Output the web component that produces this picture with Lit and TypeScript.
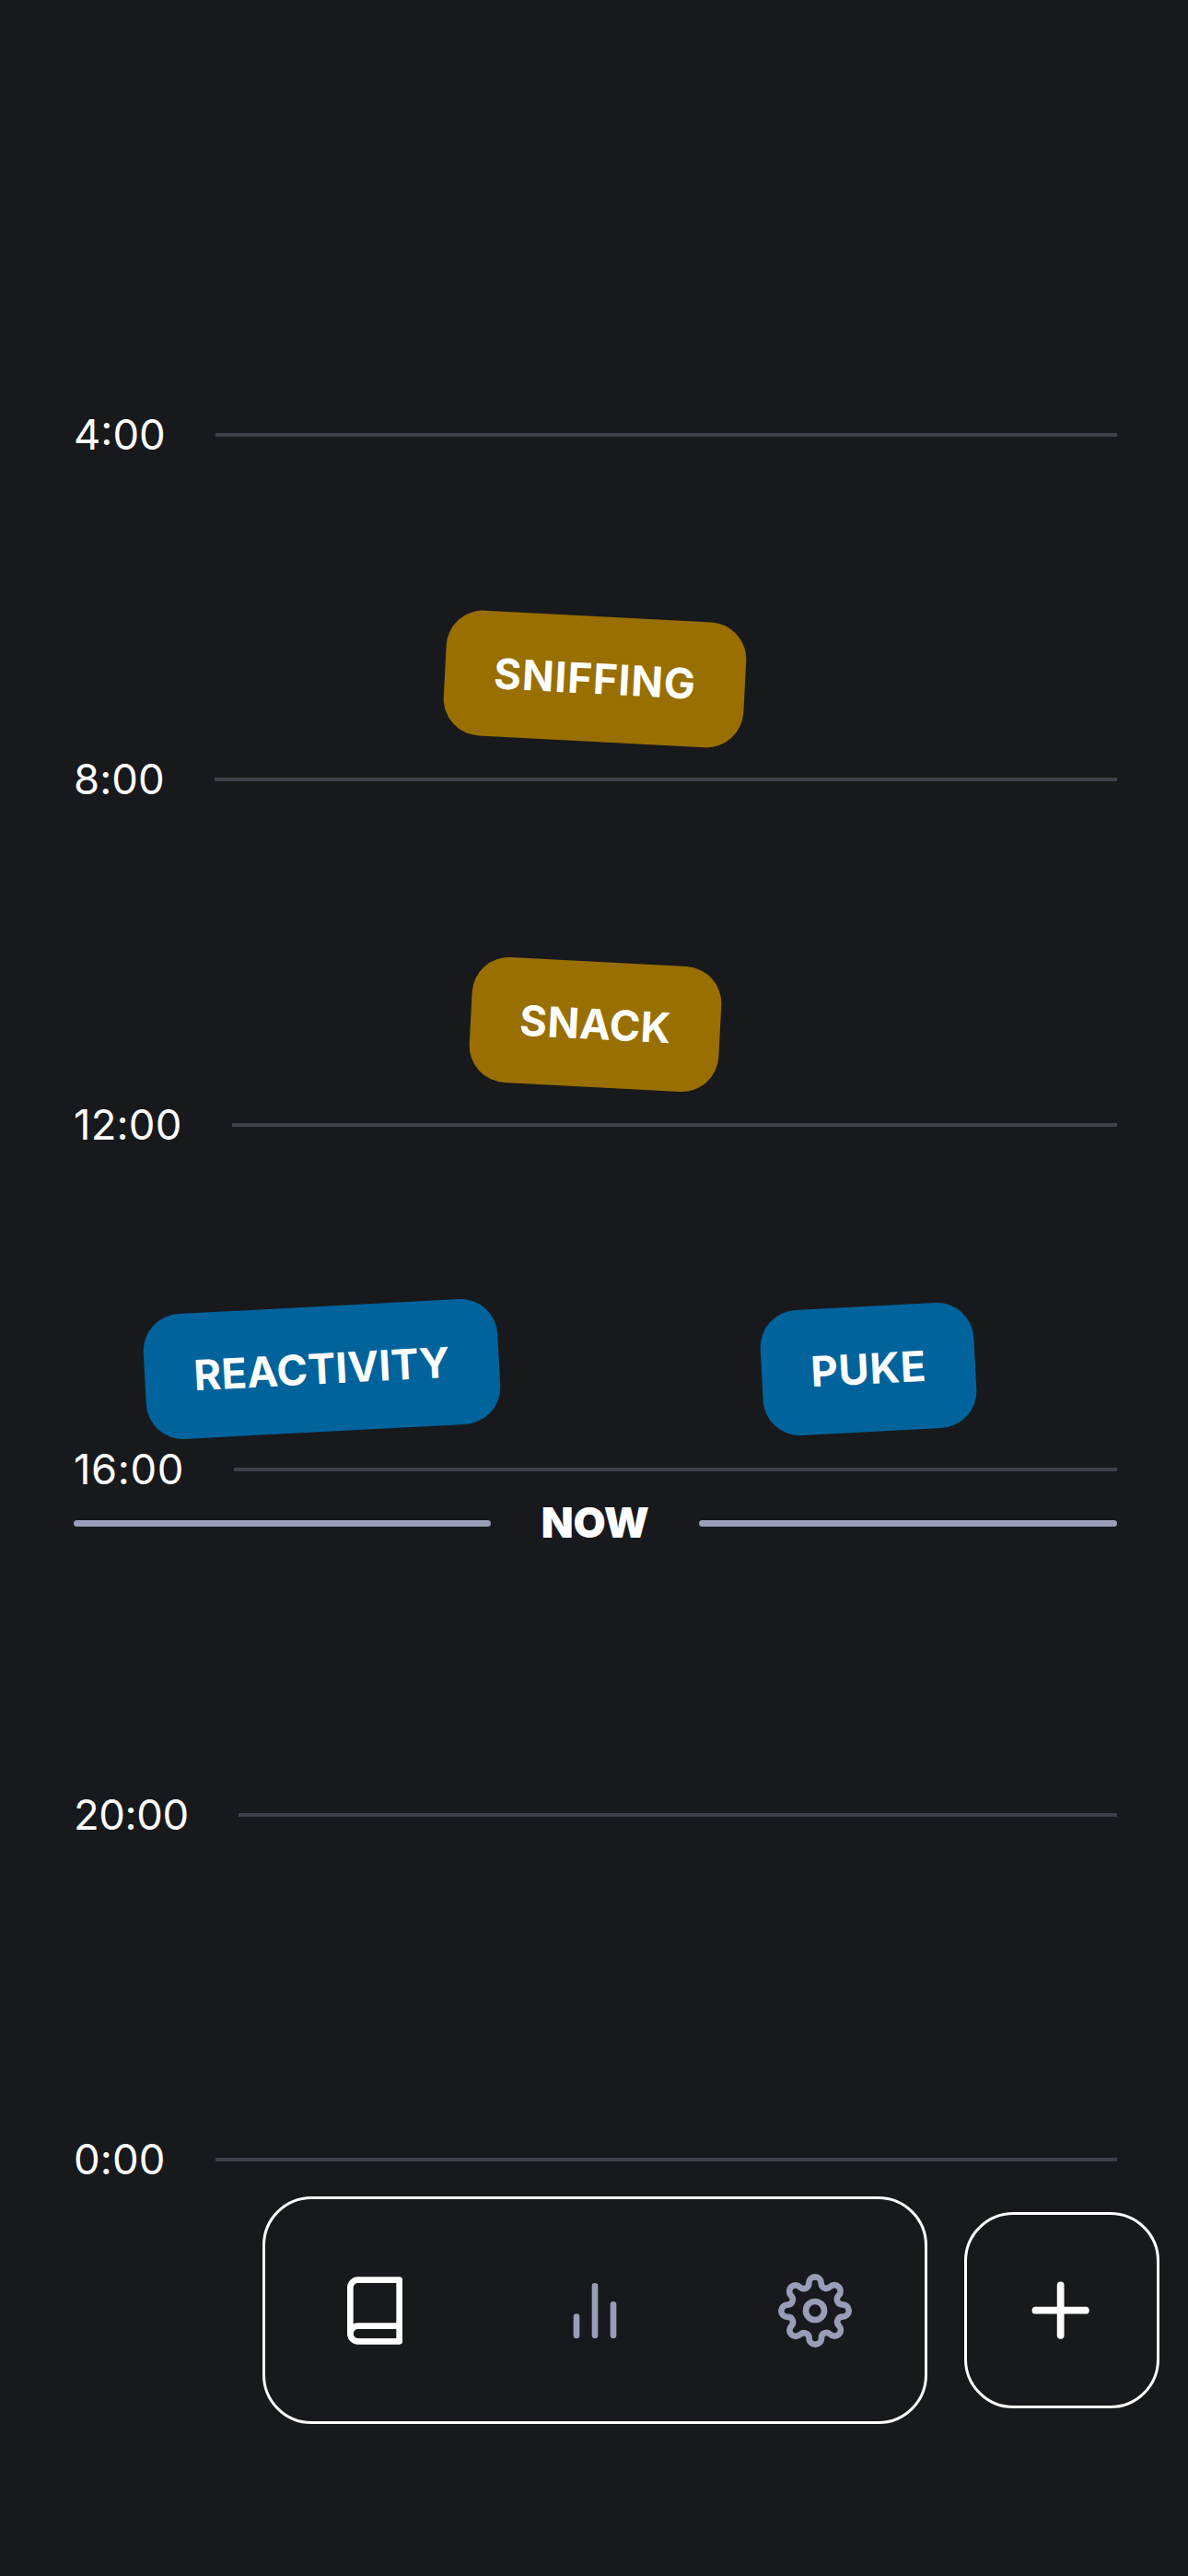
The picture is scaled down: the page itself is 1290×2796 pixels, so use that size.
import { LitElement, html, css, svg } from "lit";
import { customElement, property } from "lit/decorators.js";
import { styleMap } from "lit/directives/style-map.js";

type Entry = { name: string; tone: "amber" | "blue"; tracking: number };
type Slot = { time: string; tracking: number; entries?: Entry[]; now?: boolean };

const SLOTS: Slot[] = [
  { time: "4:00", tracking: 0, entries: [{ name: "Sniffing", tone: "amber", tracking: 1 }] },
  { time: "8:00", tracking: 0.1, entries: [{ name: "Snack", tone: "amber", tracking: 0.4 }] },
  {
    time: "12:00",
    tracking: 0.2,
    entries: [
      { name: "Reactivity", tone: "blue", tracking: 0.2 },
      { name: "Puke", tone: "blue", tracking: 0.7 },
    ],
  },
  { time: "16:00", tracking: 0.6, now: true },
  { time: "20:00", tracking: -0.4 },
  { time: "0:00", tracking: 0.1 },
];

const ICONS = {
  book: svg`<path d="M4 19.5A2.5 2.5 0 0 1 6.5 17H20"/><path d="M6.5 2H20v20H6.5A2.5 2.5 0 0 1 4 19.5v-15A2.5 2.5 0 0 1 6.5 2z"/>`,
  chart: svg`<path d="M18 20V10M12 20V4M6 20v-6"/>`,
  settings: svg`<circle cx="12" cy="12" r="3"/><path d="M19.4 15a1.65 1.65 0 0 0 .33 1.82l.06.06a2 2 0 0 1 0 2.83 2 2 0 0 1-2.83 0l-.06-.06a1.65 1.65 0 0 0-1.82-.33 1.65 1.65 0 0 0-1 1.51V21a2 2 0 0 1-2 2 2 2 0 0 1-2-2v-.09A1.65 1.65 0 0 0 9 19.4a1.65 1.65 0 0 0-1.82.33l-.06.06a2 2 0 0 1-2.83 0 2 2 0 0 1 0-2.83l.06-.06a1.65 1.65 0 0 0 .33-1.82 1.65 1.65 0 0 0-1.51-1H3a2 2 0 0 1-2-2 2 2 0 0 1 2-2h.09A1.65 1.65 0 0 0 4.6 9a1.65 1.65 0 0 0-.33-1.82l-.06-.06a2 2 0 0 1 0-2.83 2 2 0 0 1 2.83 0l.06.06a1.65 1.65 0 0 0 1.82.33H9a1.65 1.65 0 0 0 1-1.51V3a2 2 0 0 1 2-2 2 2 0 0 1 2 2v.09a1.65 1.65 0 0 0 1 1.51 1.65 1.65 0 0 0 1.82-.33l.06-.06a2 2 0 0 1 2.83 0 2 2 0 0 1 0 2.83l-.06.06a1.65 1.65 0 0 0-.33 1.82V9a1.65 1.65 0 0 0 1.51 1H21a2 2 0 0 1 2 2 2 2 0 0 1-2 2h-.09a1.65 1.65 0 0 0-1.51 1z"/>`,
  plus: svg`<path d="M12 5v14M5 12h14"/>`,
};

@customElement("line-icon")
class LineIcon extends LitElement {
  @property() name: keyof typeof ICONS = "book";

  static styles = css`
    :host {
      display: block;
      width: 80px;
      height: 80px;
    }
    .icon {
      display: block;
      width: 100%;
      height: 100%;
      fill: none;
      stroke: currentColor;
      stroke-width: 2;
      stroke-linecap: round;
      stroke-linejoin: round;
    }
  `;

  render() {
    return html`<svg class="icon" viewBox="0 0 24 24">${ICONS[this.name]}</svg>`;
  }
}

@customElement("app-root")
class AppRoot extends LitElement {
  static styles = css`
    :host {
      display: flex;
      flex-direction: column;
      box-sizing: border-box;
      height: 2796px;
      padding-top: 444px;
      overflow: hidden;
      background: #18191c;
      color: #fff;
      font-family: Inter, "Liberation Sans", sans-serif;
      font-size: 45.4px;
      line-height: 56px;
    }
    .timeline {
      display: flex;
      flex-direction: column;
      padding: 0 77.5px 0 80px;
    }
    .slot {
      display: flex;
      flex-direction: column;
      box-sizing: border-box;
      height: 374.4px;
      padding-bottom: 13px;
    }
    .slot:last-child {
      height: 56px;
      padding: 0;
    }
    .tick,
    .now {
      display: flex;
      align-items: center;
      gap: 54.5px;
    }
    .tick::after {
      content: "";
      flex: 1;
      height: 4px;
      background: #3f404a;
    }
    .now {
      margin-top: 2px;
      font-weight: 900;
    }
    .now::before,
    .now::after {
      content: "";
      flex: 1;
      height: 6.7px;
      border-radius: 4px;
      background: #999db8;
    }
    .entries {
      display: flex;
      gap: 53.3px;
      margin-top: auto;
    }
    .cell {
      display: flex;
      flex: 1 1 0;
      justify-content: center;
    }
    .chip {
      padding: 40px 53.3px;
      border-radius: 40px;
      line-height: 56px;
      font-weight: 650;
      text-transform: uppercase;
    }
    .amber {
      background: #986f00;
      transform: rotate(3deg);
    }
    .blue {
      background: #00639b;
      transform: rotate(-3deg);
    }
    .dock {
      display: flex;
      align-items: center;
      justify-content: flex-end;
      gap: 39.3px;
      margin-top: 12px;
      padding-right: 31px;
    }
    .tabs,
    .add {
      display: flex;
      align-items: center;
      box-sizing: border-box;
      border: 3.4px solid #fff;
      border-radius: 53.3px;
      background: #18191c;
    }
    .tabs {
      justify-content: space-between;
      width: 722.4px;
      height: 246.7px;
      padding: 1px 79px 0;
      color: #999db8;
    }
    .active {
      color: #fff;
    }
    .add {
      justify-content: center;
      width: 212.5px;
      height: 212.5px;
      padding-right: 1.5px;
    }
    .plus {
      width: 93.3px;
      height: 93.3px;
    }
  `;

  private tracked(px: number) {
    return styleMap({ letterSpacing: `${px}px` });
  }

  private slotRow(slot: Slot) {
    return html`<section class="slot">
      <div class="tick" style=${this.tracked(slot.tracking)}>${slot.time}</div>
      ${slot.now ? html`<div class="now">NOW</div>` : ""}
      ${slot.entries
        ? html`<div class="entries">
            ${slot.entries.map(
              (e) =>
                html`<div class="cell">
                  <div class="chip ${e.tone}" style=${this.tracked(e.tracking)}>${e.name}</div>
                </div>`
            )}
          </div>`
        : ""}
    </section>`;
  }

  render() {
    return html`
      <main class="timeline">${SLOTS.map((s) => this.slotRow(s))}</main>
      <footer class="dock">
        <nav class="tabs">
          <line-icon class="active" name="book"></line-icon>
          <line-icon name="chart"></line-icon>
          <line-icon name="settings"></line-icon>
        </nav>
        <div class="add"><line-icon class="plus" name="plus"></line-icon></div>
      </footer>
    `;
  }
}
